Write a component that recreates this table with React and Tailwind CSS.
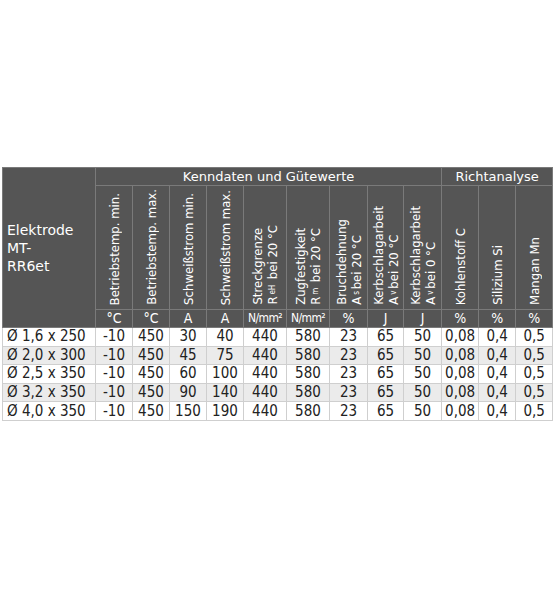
const rows = [
  ["Ø 1,6 x 250", "-10", "450", "30", "40", "440", "580", "23", "65", "50", "0,08", "0,4", "0,5"],
  ["Ø 2,0 x 300", "-10", "450", "45", "75", "440", "580", "23", "65", "50", "0,08", "0,4", "0,5"],
  ["Ø 2,5 x 350", "-10", "450", "60", "100", "440", "580", "23", "65", "50", "0,08", "0,4", "0,5"],
  ["Ø 3,2 x 350", "-10", "450", "90", "140", "440", "580", "23", "65", "50", "0,08", "0,4", "0,5"],
  ["Ø 4,0 x 350", "-10", "450", "150", "190", "440", "580", "23", "65", "50", "0,08", "0,4", "0,5"],
];

const widths = [93, 37, 37, 37, 37, 43, 43, 38, 36, 38, 37, 37, 37];
const units = ["°C", "°C", "A", "A", "N/mm²", "N/mm²", "%", "J", "J", "%", "%", "%"];

function Sub({ children }) {
  return <sub className="text-[8px] leading-none">{children}</sub>;
}

const headers = [
  ["Betriebstemp. min."],
  ["Betriebstemp. max."],
  ["Schweißstrom min."],
  ["Schweißstrom max."],
  ["Streckgrenze", <>R<Sub>eH</Sub>&nbsp; bei 20 °C</>],
  ["Zugfestigkeit", <>R<Sub>m</Sub>&nbsp; bei 20 °C</>],
  ["Bruchdehnung", <>A<Sub>s</Sub>&nbsp;bei 20 °C</>],
  ["Kerbschlagarbeit", <>A<Sub>v</Sub>&nbsp;bei 20 °C</>],
  ["Kerbschlagarbeit", <>A<Sub>v</Sub>&nbsp;bei 0 °C</>],
  ["Kohlenstoff C"],
  ["Silizium Si"],
  ["Mangan Mn"],
];

function App() {
  return (
    <main className="min-h-screen bg-white px-[2px] pt-[167px] font-['DejaVu_Sans',sans-serif]">
      <table className="w-[550px] table-fixed border-collapse">
        <colgroup>
          {widths.map((w, i) => (
            <col key={i} style={{ width: w }} />
          ))}
        </colgroup>
        <thead className="bg-[#555555] text-white">
          <tr className="h-[18px]">
            <th
              rowSpan={3}
              className="border border-[#7a7a7a] px-[4px] text-left align-middle text-[14px] font-normal leading-[18px]"
            >
              Elektrode
              <br />
              MT-
              <br />
              RR6et
            </th>
            <th colSpan={9} className="border border-[#7a7a7a] text-[13px] font-normal leading-[17px]">
              Kenndaten und Gütewerte
            </th>
            <th colSpan={3} className="border border-[#7a7a7a] text-[13px] font-normal leading-[17px]">
              Richtanalyse
            </th>
          </tr>
          <tr className="h-[124px]">
            {headers.map((lines, i) => (
              <th key={i} className="border border-[#7a7a7a] p-0 align-bottom font-normal">
                <div className="flex justify-center pb-[4px]">
                  <div className="rotate-180 text-left font-['DejaVu_Sans_Condensed',sans-serif] text-[13px] leading-[15px] [writing-mode:vertical-rl]">
                    {lines.map((l, j) => (
                      <div key={j} className="whitespace-nowrap">{l}</div>
                    ))}
                  </div>
                </div>
              </th>
            ))}
          </tr>
          <tr className="h-[18px]">
            {units.map((u, i) => (
              <th
                key={i}
                className={
                  u === "N/mm²"
                    ? "border border-[#7a7a7a] p-0 text-center font-['DejaVu_Sans_Condensed',sans-serif] text-[12px] font-normal leading-[17px] tracking-[-0.6px]"
                    : "border border-[#7a7a7a] p-0 text-center font-['DejaVu_Sans_Condensed',sans-serif] text-[14px] font-normal leading-[17px]"
                }
              >
                {u}
              </th>
            ))}
          </tr>
        </thead>
        <tbody className="font-['DejaVu_Sans_Condensed',sans-serif] text-[15px] text-[#222222]">
          {rows.map((r, i) => (
            <tr key={i} className={i % 2 === 1 ? "h-[18.6px] bg-[#ebebeb]" : "h-[18.6px] bg-white"}>
              {r.map((c, j) => (
                <td
                  key={j}
                  className={
                    j === 0
                      ? "border border-[#cfcfcf] px-[4px] text-left leading-[17px]"
                      : "border border-[#cfcfcf] p-0 text-center leading-[17px]"
                  }
                >
                  {c}
                </td>
              ))}
            </tr>
          ))}
        </tbody>
      </table>
    </main>
  );
}

export default App;
